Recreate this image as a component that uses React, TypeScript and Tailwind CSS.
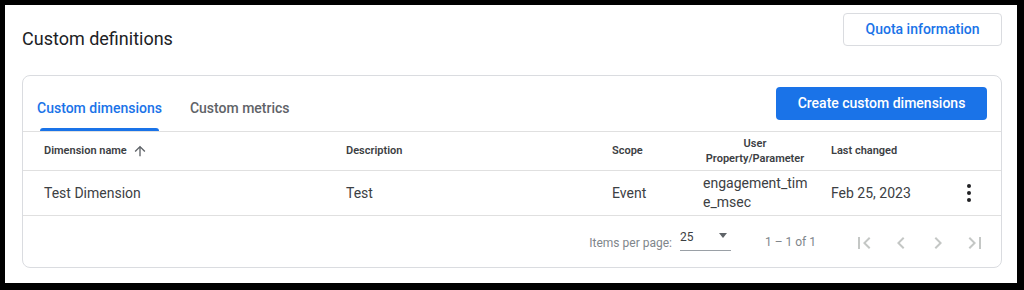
import React from 'react';

const cols = 'grid grid-cols-[302px_266px_91px_128px_120px_1fr] pl-[21px]';

function SortUp() {
  return (
    <svg width="16" height="16" viewBox="0 0 24 24" fill="#5f6368">
      <path d="M4 12l1.41 1.41L11 7.83V20h2V7.83l5.58 5.59L20 12l-8-8-8 8z" />
    </svg>
  );
}

function NavIcon({ d }: { d: string }) {
  return (
    <div className="w-[37px] h-[37px] flex items-center justify-center">
      <svg width="24" height="24" viewBox="0 0 24 24" fill="#c4c7c5">
        <path d={d} />
      </svg>
    </div>
  );
}

export default function App() {
  return (
    <div className="bg-black w-[1024px] h-[290px] pt-[5px] pl-[5px] font-['Roboto',sans-serif]">
      <div className="w-[1012px] h-[278px] bg-white pl-[17px] pr-[15px] pt-[8px]">
        {/* page header */}
        <div className="flex items-start justify-between">
          <h1 className="pt-[14px] text-[18px] leading-[24px] text-[#202124]">Custom definitions</h1>
          <button className="w-[159px] h-[33px] rounded border border-[#dadce0] text-[14px] font-medium text-[#1a73e8]">
            Quota information
          </button>
        </div>

        {/* card */}
        <div className="mt-[24px] w-[980px] rounded-lg border border-[#dadce0] overflow-hidden">
          <div className="flex justify-between border-b border-[#e0e0e0] pl-[14px] pr-[14px]">
            <div className="flex gap-[28px]">
              <div className="flex flex-col items-center h-[55px] pt-[22px]">
                <span className="text-[14px] leading-[20px] font-medium text-[#1a73e8]">Custom dimensions</span>
                <div className="mt-[10px] h-[3px] w-[119px] rounded-t-[3px] bg-[#1a73e8]" />
              </div>
              <div className="flex flex-col items-center h-[55px] pt-[22px]">
                <span className="text-[14px] leading-[20px] font-medium text-[#5f6368]">Custom metrics</span>
              </div>
            </div>
            <button className="mt-[11px] w-[211px] h-[33px] rounded bg-[#1a73e8] text-white text-[14px] font-medium">
              Create custom dimensions
            </button>
          </div>

          {/* table header */}
          <div className={`${cols} h-[39px] items-center border-b border-[#e0e0e0] text-[11px] font-semibold text-[#3c4043]`}>
            <div className="flex items-center gap-[5px]">
              Dimension name <SortUp />
            </div>
            <div>Description</div>
            <div>Scope</div>
            <div className="w-[104px] text-center leading-[15px]">User Property/Parameter</div>
            <div>Last changed</div>
            <div />
          </div>

          {/* row */}
          <div className={`${cols} h-[45px] items-center border-b border-[#e0e0e0] text-[14px] text-[#3c4043]`}>
            <div>Test Dimension</div>
            <div>Test</div>
            <div>Event</div>
            <div className="leading-[19px]">
              engagement_tim
              <br />
              e_msec
            </div>
            <div>Feb 25, 2023</div>
            <div className="pl-[14px]">
              <svg width="8" height="20" viewBox="0 0 8 20" fill="#202124">
                <circle cx="4" cy="3" r="2" />
                <circle cx="4" cy="10" r="2" />
                <circle cx="4" cy="17" r="2" />
              </svg>
            </div>
          </div>

          {/* paginator */}
          <div className="h-[51px] flex items-center justify-end pr-[8px] pt-[3px] text-[12px] text-[#80868b]">
            <span>Items per page:</span>
            <div className="ml-[8px] -mt-[6px] w-[51px] h-[22px] border-b border-[#9aa0a6] flex items-start justify-between">
              <span className="text-[#3c4043] leading-[16px]">25</span>
              <svg width="10" height="6" viewBox="0 0 10 6" className="mr-[3px] mt-[4px]" fill="#5f6368">
                <path d="M1 0h8L5 5z" />
              </svg>
            </div>
            <span className="ml-[34px] mr-[29px] -mt-[2px]">1 – 1 of 1</span>
            <NavIcon d="M18.41 16.59L13.82 12l4.59-4.59L17 6l-6 6 6 6zM6 6h2v12H6z" />
            <NavIcon d="M15.41 7.41L14 6l-6 6 6 6 1.41-1.41L10.83 12z" />
            <NavIcon d="M10 6L8.59 7.41 13.17 12l-4.58 4.59L10 18l6-6z" />
            <NavIcon d="M5.59 7.41L10.18 12l-4.59 4.59L7 18l6-6-6-6zM16 6h2v12h-2z" />
          </div>
        </div>
      </div>
    </div>
  );
}
